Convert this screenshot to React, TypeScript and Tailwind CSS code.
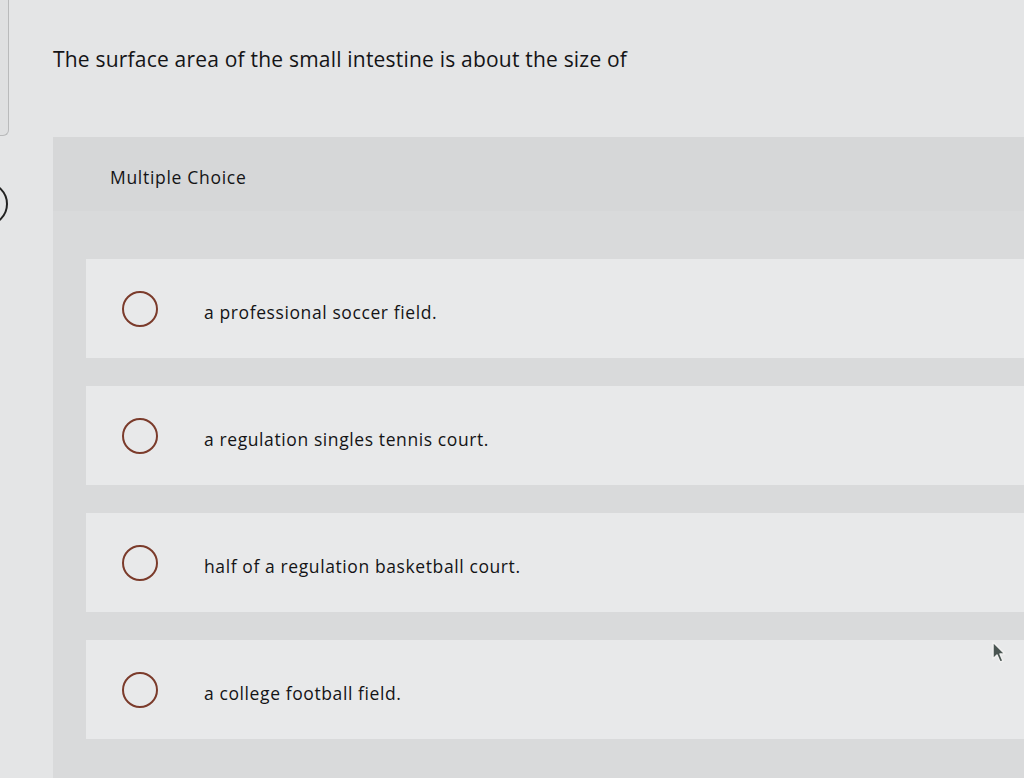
import React from 'react';

const options = [
  'a professional soccer field.',
  'a regulation singles tennis court.',
  'half of a regulation basketball court.',
  'a college football field.',
];

export default function App() {
  return (
    <div
      className="relative w-[1024px] h-[778px] overflow-hidden bg-[#e4e5e6] flex text-[#141416]"
      style={{ fontFamily: '"Open Sans", Lato, sans-serif' }}
    >
      {/* left edge of previous panel */}
      <div className="w-[10px] shrink-0 flex flex-col">
        <div className="h-[136px] w-[11px] -ml-[2px] rounded-br-[6px] border-r border-b border-[#b9babb] bg-[#dfe0e1]" />
        <div className="mt-[46px] h-[44px] w-[44px] -ml-[36px] rounded-full border-2 border-[#222]" />
      </div>

      <div className="flex-1 flex flex-col pl-[43px] pt-[45px]">
        <h1 className="text-[21px] leading-[28px] tracking-[0.2px]">
          The surface area of the small intestine is about the size of
        </h1>

        {/* Multiple choice panel */}
        <div className="mt-[64px] flex-1 bg-[#d9dadb] flex flex-col">
          <div className="h-[74px] pl-[57px] pt-[6px] flex items-center bg-[#d6d7d8]">
            <span className="text-[17.5px] tracking-[0.7px]">Multiple Choice</span>
          </div>
          <div className="flex flex-col gap-[28px] pl-[33px] pt-[48px]">
            {options.map((o) => (
              <div key={o} className="h-[99px] bg-[#e8e9ea] flex items-center pl-[36px]">
                <span className="w-[36px] h-[36px] rounded-full border-2 border-[#7b3b2b] shrink-0" />
                <span className="ml-[46px] pt-[8px] text-[17.5px] tracking-[0.6px]">{o}</span>
              </div>
            ))}
          </div>
        </div>
      </div>

      {/* mouse cursor */}
      <svg className="absolute left-[991px] top-[640px]" width="16" height="24" viewBox="0 0 16 24">
        <path d="M2 2 L2 19 L6 15 L9 22 L12 21 L9 14 L14 14 Z" fill="#4a5552" stroke="#f0f0f0" strokeWidth="1.5" strokeLinejoin="round" />
      </svg>
    </div>
  );
}
